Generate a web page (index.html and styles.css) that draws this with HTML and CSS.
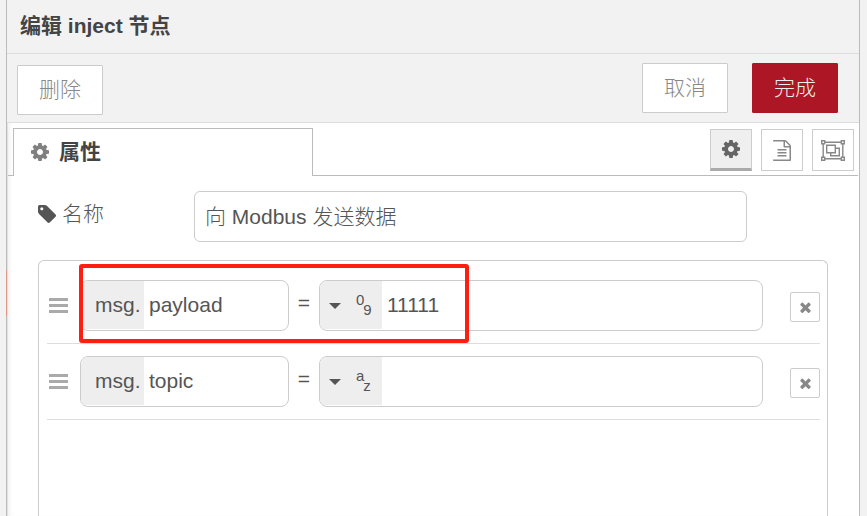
FILE: index.html
```html
<!DOCTYPE html>
<html lang="zh-CN">
<head>
<meta charset="utf-8">
<title>编辑 inject 节点</title>
<link rel="stylesheet" href="styles.css">
</head>
<body>
<svg class="defs" width="0" height="0">
  <symbol id="cog" viewBox="128 128 1536 1536"><path d="M1152 896q0-106-75-181t-181-75-181 75-75 181 75 181 181 75 181-75 75-181zm512-109v222q0 12-8 23t-20 13l-185 28q-19 54-39 91 35 50 107 138 10 12 10 25t-9 23q-27 37-99 108t-94 71q-12 0-26-9l-138-108q-44 23-91 38-16 136-29 186-7 28-36 28h-222q-14 0-24.500-8.500t-11.500-21.500l-28-184q-49-16-90-37l-141 107q-10 9-25 9-14 0-25-11-126-114-165-168-7-10-7-23 0-12 8-23 15-21 51-66.500t54-70.500q-27-50-41-99l-183-27q-13-2-21-12.500t-8-23.500v-222q0-12 8-23t19-13l186-28q14-46 39-92-40-57-107-138-10-12-10-24 0-10 9-23 26-36 98.500-107.500t94.500-71.500q13 0 26 10l138 107q44-23 91-38 16-136 29-186 7-28 36-28h222q14 0 24.500 8.500t11.500 21.500l28 184q49 16 90 37l142-107q9-9 24-9 13 0 25 10 129 119 165 170 7 8 7 22 0 12-8 23-15 21-51 66.500t-54 70.500q26 50 41 98l183 28q13 2 21 12.500t8 23.500z"/></symbol>
  <symbol id="times" viewBox="302 302 1188 1252"><path d="M1490 1322q0 40-28 68l-136 136q-28 28-68 28t-68-28l-294-294-294 294q-28 28-68 28t-68-28l-136-136q-28-28-28-68t28-68l294-294-294-294q-28-28-28-68t28-68l136-136q28-28 68-28t68 28l294 294 294-294q28-28 68-28t68 28l136 136q28 28 28 68t-28 68l-294 294 294 294q28 28 28 68z"/></symbol>
</svg>
<main class="tray">
  <header class="tray-header">编辑 inject 节点</header>
  <div class="toolbar">
    <button class="btn btn-delete">删除</button>
    <div class="actions">
      <button class="btn">取消</button>
      <button class="btn btn-primary">完成</button>
    </div>
  </div>
  <div class="tabs">
    <div class="tab"><svg class="tab-icon"><use href="#cog"/></svg><span>属性</span></div>
    <div class="tab-tools">
      <button class="tool selected"><svg class="tool-cog"><use href="#cog"/></svg></button>
      <button class="tool"><svg width="18" height="21" viewBox="128 0 1536 1792"><path d="M1596 380q28 28 48 76t20 88v1152q0 40-28 68t-68 28h-1344q-40 0-68-28t-28-68v-1600q0-40 28-68t68-28h896q40 0 88 20t76 48zm-444-244v376h376q-10-29-22-41l-313-313q-12-12-41-22zm384 1528v-1024h-416q-40 0-68-28t-28-68v-416h-896v1536h1280zm-1024-864q0-14 9-23t23-9h704q14 0 23 9t9 23v64q0 14-9 23t-23 9h-704q-14 0-23-9t-9-23v-64zm736 224q14 0 23 9t9 23v64q0 14-9 23t-23 9h-704q-14 0-23-9t-9-23v-64q0-14 9-23t23-9h704zm0 256q14 0 23 9t9 23v64q0 14-9 23t-23 9h-704q-14 0-23-9t-9-23v-64q0-14 9-23t23-9h704z"/></svg></button>
      <button class="tool"><svg class="group-icon" width="24" height="21" viewBox="0 0 24 21"><path d="M4 2.200h16M4 18.800h16M2.200 4v13M21.800 4v13M.7.700h3v3h-3zM20.300.700h3v3h-3zM.7 17.300h3v3h-3zM20.300 17.300h3v3h-3zM5.700 5.200h8.600v7.600H5.700zM14.300 8.200h4v7.600H9.700v-3"/></svg></button>
    </div>
  </div>
  <section class="form">
    <div class="form-row">
      <label class="name-label"><svg width="18" height="18" viewBox="128 128 1515 1515"><path d="M576 448q0-53-37.500-90.500t-90.500-37.500-90.500 37.500-37.500 90.500 37.500 90.500 90.500 37.500 90.500-37.500 37.500-90.500zm1067 576q0 53-37 90l-491 492q-39 37-91 37-53 0-90-37l-715-716q-38-37-64.500-101t-26.500-117v-416q0-52 38-90t90-38h416q53 0 117 26.500t102 64.500l715 714q37 39 37 91z"/></svg>名称</label>
      <div class="name-input">向 Modbus 发送数据</div>
    </div>
    <div class="list">
      <div class="item">
        <i class="handle"></i>
        <div class="field prop"><span class="prefix">msg.</span><span class="value">payload</span></div>
        <span class="equals">=</span>
        <div class="field typed"><span class="type"><i class="caret"></i><span class="glyph"><sup>0</sup><sub>9</sub></span></span><span class="value number">11111</span></div>
        <button class="remove"><svg><use href="#times"/></svg></button>
      </div>
      <div class="item">
        <i class="handle"></i>
        <div class="field prop"><span class="prefix">msg.</span><span class="value">topic</span></div>
        <span class="equals">=</span>
        <div class="field typed"><span class="type"><i class="caret"></i><span class="glyph"><sup>a</sup><sub>z</sub></span></span><span class="value"></span></div>
        <button class="remove"><svg><use href="#times"/></svg></button>
      </div>
    </div>
  </section>
</main>
<div class="edge-node"></div>
<div class="highlight"></div>
</body>
</html>
```
FILE: styles.css
```css
* { box-sizing: border-box; }
body {
  margin: 0;
  height: 516px;
  overflow: hidden;
  background: #f2f2f2;
  color: #555;
  font: 21px/30px "Liberation Sans", "Noto Sans CJK SC", sans-serif;
}
.defs { position: absolute; }
svg { display: block; fill: currentColor; flex: none; }
button { font: inherit; padding: 0; margin: 0; color: #888; background: #fff; }
.tray {
  width: 853px;
  height: 516px;
  margin-left: 7px;
  display: flex;
  flex-direction: column;
  background: #fff;
  border-right: 1px solid #bbb;
  box-shadow: -1px 0 0 #bbb, inset 1px 0 0 #e2e2e2, inset 5px 0 5px -3px #ececec;
}
.tray-header {
  height: 54px;
  padding: 11px 13px;
  border-bottom: 1px solid #ddd;
  background: #f2f2f2;
  color: #444;
  font-weight: bold;
}
.toolbar {
  height: 69px;
  padding: 9px 21px 0 10px;
  display: flex;
  justify-content: space-between;
  background: #f2f2f2;
  border-bottom: 1px solid #ddd;
}
.actions { display: flex; gap: 24px; }
.btn {
  width: 86px;
  height: 50px;
  border: 1px solid #ccc;
  border-radius: 1px;
  font-weight: 300;
}
.btn-delete { margin-top: 2px; }
.btn-primary { background: #ad1625; border-color: #ad1625; color: #eee; }
.tabs { height: 53px; display: flex; padding: 5px 0 0 1px; }
.tabs::before { content: ""; width: 5px; border-bottom: 1px solid #bbb; }
.tab {
  width: 300px;
  padding: 0 0 2px 17px;
  display: flex;
  align-items: center;
  gap: 10px;
  border: 1px solid #bbb;
  border-bottom: 0;
  color: #444;
  font-weight: bold;
}
.tab-icon { width: 18px; height: 18px; color: #808080; }
.tab-tools {
  flex: 1;
  display: flex;
  justify-content: flex-end;
  gap: 9px;
  padding: 1px 4px 0 0;
  margin-right: 1px;
  border-bottom: 1px solid #bbb;
}
.tool {
  width: 42px;
  height: 42px;
  display: flex;
  align-items: center;
  justify-content: center;
  border: 1px solid #ccc;
}
.tool.selected { background: #efefef; border-bottom: 3px solid #aaa; color: #666; }
.tool-cog { width: 18px; height: 18px; }
.group-icon { fill: none; stroke: currentColor; stroke-width: 1.4; }
.form { padding: 15px 31px 0; flex: 1; display: flex; flex-direction: column; min-height: 0; }
.form-row { display: flex; height: 51px; }
.name-label {
  width: 156px;
  height: 46px;
  display: flex;
  align-items: center;
  gap: 6px;
  font-weight: 300;
}
.name-input {
  width: 553px;
  padding: 10px;
  border: 1px solid #ccc;
  border-radius: 6px;
  font-weight: 300;
}
.list {
  margin-top: 18px;
  width: 790px;
  flex: 1;
  padding: 7px 7px 0 8px;
  border: 1px solid #ccc;
  border-bottom: 0;
  border-radius: 6px 6px 0 0;
}
.item { height: 76px; padding: 12px 0; display: flex; border-bottom: 1px solid #ddd; }
.handle {
  width: 19px;
  height: 15px;
  margin: 18px 12px 0 2px;
  background: linear-gradient(#aaa 0 3px, transparent 3px 6px, #aaa 6px 9px, transparent 9px 12px, #aaa 12px);
}
.field {
  height: 51px;
  display: flex;
  border: 1px solid #ccc;
  border-radius: 8px;
  overflow: hidden;
  line-height: 48px;
}
.prop { width: 209px; }
.prefix { width: 63px; height: 48px; padding-left: 14px; background: #eee; }
.value { padding-left: 5px; }
.number { padding-left: 5px; }
.equals { width: 30px; text-align: center; line-height: 46px; }
.typed { width: 444px; }
.type { width: 62px; height: 48px; padding-left: 9px; display: flex; align-items: center; background: #eee; }
.caret { margin-top: 2px; border: 6px solid transparent; border-top-color: #555; border-bottom: 0; }
.glyph { display: flex; margin-left: 15px; font-size: 15px; line-height: 16px; }
.glyph sup, .glyph sub { font-size: inherit; vertical-align: baseline; }
.glyph sup { padding-bottom: 10px; }
.glyph sub { padding-top: 10px; margin-left: -1px; }
.remove {
  width: 30px;
  height: 30px;
  margin: 12px 0 0 27px;
  display: flex;
  align-items: center;
  justify-content: center;
  border: 1px solid #ccc;
  border-radius: 2px;
}
.remove svg { width: 11px; height: 11px; }
.edge-node { position: absolute; left: 6px; top: 270px; width: 1px; height: 46px; background: #dd9a88; }
.highlight {
  position: absolute;
  left: 79px;
  top: 264px;
  width: 390px;
  height: 79px;
  border: 4px solid #ff1e10;
  border-radius: 3px;
}
```
